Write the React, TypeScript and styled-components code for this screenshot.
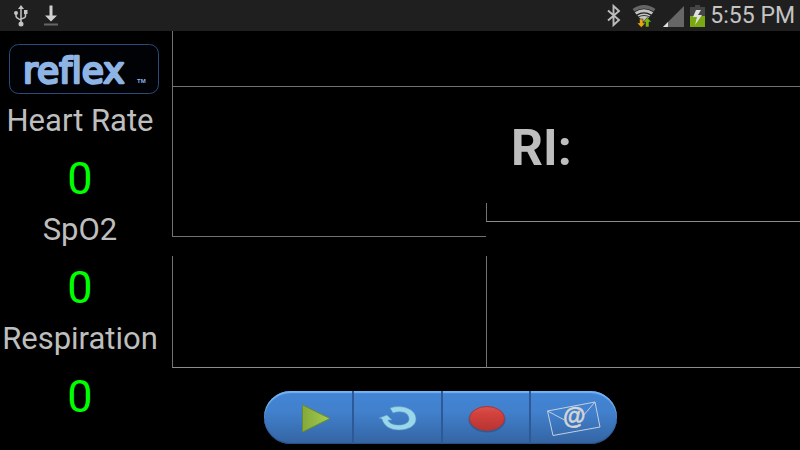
import React from 'react';
import styled, { createGlobalStyle, css } from 'styled-components';

const Global = createGlobalStyle`
  * { box-sizing: border-box; }
  body { margin: 0; background: #000; color: #bebebe; font-family: Roboto, sans-serif; }
`;

const Screen = styled.div`
  min-height: 100vh;
  display: flex;
  flex-direction: column;
  background: #000;
`;

const StatusBar = styled.header`
  display: flex;
  align-items: center;
  justify-content: space-between;
  height: 31px;
  padding: 0 5px 0 13px;
  background: #1f1f1f;
`;

const StatusGroup = styled.div<{ $gap: number }>`
  display: flex;
  align-items: center;
  gap: ${({ $gap }) => $gap}px;
`;

const Clock = styled.time`
  font-size: 23px;
  line-height: 31px;
  color: #c4c4c4;
`;

const Icon = styled.svg`
  display: block;
  flex: none;
`;

const Body = styled.div`
  flex: 1;
  display: flex;
`;

const Sidebar = styled.aside`
  flex: none;
  width: 172px;
  padding-top: 12px;
`;

const Logo = styled.svg`
  display: block;
  margin: 0 0 6px 8px;

  text { font-variant-ligatures: none; }
`;

const Vitals = styled.dl`
  width: 160px;
  margin: 0;
  text-align: center;
`;

const VitalName = styled.dt`
  font-size: 31px;
  line-height: 40px;
  white-space: nowrap;
`;

const VitalValue = styled.dd`
  margin: 0;
  padding: 8px 0 1px;
  font-size: 45px;
  line-height: 60px;
  color: #0f0;
`;

const Main = styled.main`
  flex: 1;
  min-width: 0;
`;

const line = '1px solid #727272';

const Strip = styled.section`
  height: 56px;
  border-left: ${line};
  border-bottom: ${line};
`;

const Columns = styled.div`
  display: grid;
  grid-template-columns: 1fr 1fr;
`;

const Column = styled.div`
  display: flex;
  flex-direction: column;
`;

const Plot = styled.section<{ $height: number; $gap?: number; $strong?: boolean }>`
  height: ${({ $height }) => $height}px;
  margin-top: ${({ $gap = 0 }) => $gap}px;
  border-left: ${line};
  border-bottom: ${line};
  ${({ $strong }) => $strong && css`border-bottom-color: #8c8c8c;`}
`;

const Index = styled.h1`
  height: 116px;
  margin: 0;
  padding: 31px 0 0 25px;
  font-size: 50px;
  line-height: 60px;
  font-weight: 700;
`;

const Toolbar = styled.nav`
  display: grid;
  grid-template-columns: repeat(4, 1fr);
  width: 353px;
  height: 53px;
  margin: 23px 0 0 92px;
  overflow: hidden;
  border-radius: 27px;
  background: linear-gradient(#4285d6, #4180cc 40%, #3464a2);
  box-shadow: inset 0 2px 1px #75b4f5, inset 0 -1px 1px #294f84;
`;

const Tool = styled.button<{ $indent?: number }>`
  display: flex;
  align-items: center;
  justify-content: center;
  padding: 0 0 0 ${({ $indent = 0 }) => $indent}px;
  border: 0;
  background: none;
  cursor: pointer;
  & + & { border-left: 2px solid #2d5a96; }
`;

export default function App() {
  return (
    <Screen>
      <Global />
      <StatusBar>
        <StatusGroup $gap={9}>
          <Icon width="16" height="24" viewBox="0 0 16 24" fill="none" stroke="#c4c4c4" strokeWidth="1.5" role="img" aria-label="USB connected">
            <path d="M8 3v18M3 9v3q0 2 5 4M12.500 8v4q0 2-4.500 3" />
            <path d="M8 1l3 4H5zM11 6h3.500v4H11z" fill="#c4c4c4" stroke="none" />
            <circle cx="3" cy="9" r="2" fill="#c4c4c4" stroke="none" />
            <circle cx="8" cy="20" r="2.500" fill="#c4c4c4" stroke="none" />
          </Icon>
          <Icon width="26" height="24" viewBox="0 0 26 24" role="img" aria-label="Download complete">
            <path d="M11.500 1.500h3v10H19l-6 6-6-6h4.500z" fill="#d0d0d0" />
            <path d="M6 19.500h14v2H6z" fill="#666" />
          </Icon>
        </StatusGroup>
        <StatusGroup $gap={5}>
          <Icon width="98" height="28" viewBox="607 2 98 28" role="img" aria-label="Bluetooth, Wi-Fi, signal, battery charging">
            <path d="M608 10.500l11 9.500-5.500 5V6l5.500 5-11 9.500" fill="none" stroke="#bcbcbc" strokeWidth="1.900" />
            <path d="M632.500 9q11.500-8 23 0l-2 2.500q-9.500-6-19 0z" fill="#666" />
            <path d="M634.800 12.300q9.200-6 18.400 0l-1.700 2.200q-7.500-4.500-15 0z" fill="#c4c4c4" />
            <path d="M637.500 15.500q6.500-4 13 0L644 23z" fill="#c4c4c4" />
            <path d="M638 17.200q6-3.500 12 0" fill="none" stroke="#1f1f1f" strokeWidth=".8" />
            <path d="M639.500 19h3.500v4h2.500l-4.200 4.500-4.300-4.500h2.500z" fill="#e5a610" stroke="#1f1f1f" strokeWidth=".5" />
            <path d="M645.500 27h3.500v-5h2.500l-4.200-4.500-4.300 4.500h2.500z" fill="#7ab510" stroke="#1f1f1f" strokeWidth=".5" />
            <path d="M684 6v21h-21z" fill="#666" />
            <path d="M668 22v5h-5z" fill="#e0e0e0" />
            <path d="M695 5h5v2h5v9h-15V7h5z" fill="#454545" />
            <path d="M690 16h15v11h-15z" fill="#79a812" />
            <path d="M696 10l-3 7h4l-2 8 7-10h-4l3-5z" fill="#e0e0e0" />
          </Icon>
          <Clock>5:55 PM</Clock>
        </StatusGroup>
      </StatusBar>
      <Body>
        <Sidebar>
          <Logo width="152" height="52" viewBox="0 0 152 52" role="img" aria-label="reflex">
            <rect x="1.500" y="1.500" width="149" height="49" rx="9" fill="#000206" stroke="#294a7b" />
            <text x="15" y="40" fontFamily="DejaVu Sans, sans-serif" fontSize="36" fill="#8eb4e6" stroke="#8eb4e6" strokeWidth="2.5" strokeLinejoin="round">reflex</text>
            <text x="129" y="40" fontFamily="Liberation Sans, sans-serif" fontWeight="700" fontSize="6" fill="#8eb4e6">TM</text>
          </Logo>
          <Vitals>
            <VitalName>Heart Rate</VitalName>
            <VitalValue>0</VitalValue>
            <VitalName>SpO2</VitalName>
            <VitalValue>0</VitalValue>
            <VitalName>Respiration</VitalName>
            <VitalValue>0</VitalValue>
          </Vitals>
        </Sidebar>
        <Main>
          <Strip />
          <Columns>
            <Column>
              <Plot $height={150} />
              <Plot $height={112} $gap={19} $strong />
            </Column>
            <Column>
              <Index>RI:</Index>
              <Plot $height={19} $strong />
              <Plot $height={112} $gap={34} $strong />
            </Column>
          </Columns>
          <Toolbar aria-label="Recording controls">
            <Tool type="button" aria-label="Play" $indent={16}>
              <Icon width="32" height="32" viewBox="0 0 32 32">
                <defs>
                  <linearGradient id="play" x2="1" y2="0">
                    <stop offset="0" stopColor="#84a83c" />
                    <stop offset="1" stopColor="#a4cf4c" />
                  </linearGradient>
                </defs>
                <path d="M2.500 3v27L30 16.500z" fill="url(#play)" stroke="#688b2f" />
              </Icon>
            </Tool>
            <Tool type="button" aria-label="Restart" $indent={2}>
              <Icon width="40" height="26" viewBox="0 0 40 26">
                <path d="M12 3C24-1 38 4 38 14 38 21 30 25 21 25 12 25 6 21 4 14L1 13 9 10 14 15H10C11 18 15 20 21 20 27 20 31 17.500 31 14 31 8 24 5 15 8z" fill="#9bd7eb" stroke="#5c9cc4" strokeWidth=".6" />
              </Icon>
            </Tool>
            <Tool type="button" aria-label="Record" $indent={2}>
              <Icon width="40" height="30" viewBox="0 0 40 30">
                <defs>
                  <linearGradient id="record" x2="0" y2="1">
                    <stop offset="0" stopColor="#d9534d" />
                    <stop offset=".3" stopColor="#d3413d" />
                    <stop offset="1" stopColor="#b83431" />
                  </linearGradient>
                </defs>
                <ellipse cx="20" cy="16.500" rx="18.500" ry="13" fill="#2a4e80" opacity=".6" />
                <ellipse cx="20" cy="15.500" rx="17.500" ry="12" fill="url(#record)" stroke="#a8383c" />
              </Icon>
            </Tool>
            <Tool type="button" aria-label="Send by e-mail">
              <Icon width="56" height="38" viewBox="0 0 56 38" fill="none" stroke="#c5cfdf">
                <path d="M1.500 12L49 3l5 25L7 36.500zM1.500 12l17 9M37 17L49 3" />
                <text x="17" y="25" fontFamily="Liberation Sans, sans-serif" fontWeight="700" fontSize="23" fill="#d5d5d5" stroke="#d5d5d5" strokeWidth=".5">@</text>
              </Icon>
            </Tool>
          </Toolbar>
        </Main>
      </Body>
    </Screen>
  );
}
